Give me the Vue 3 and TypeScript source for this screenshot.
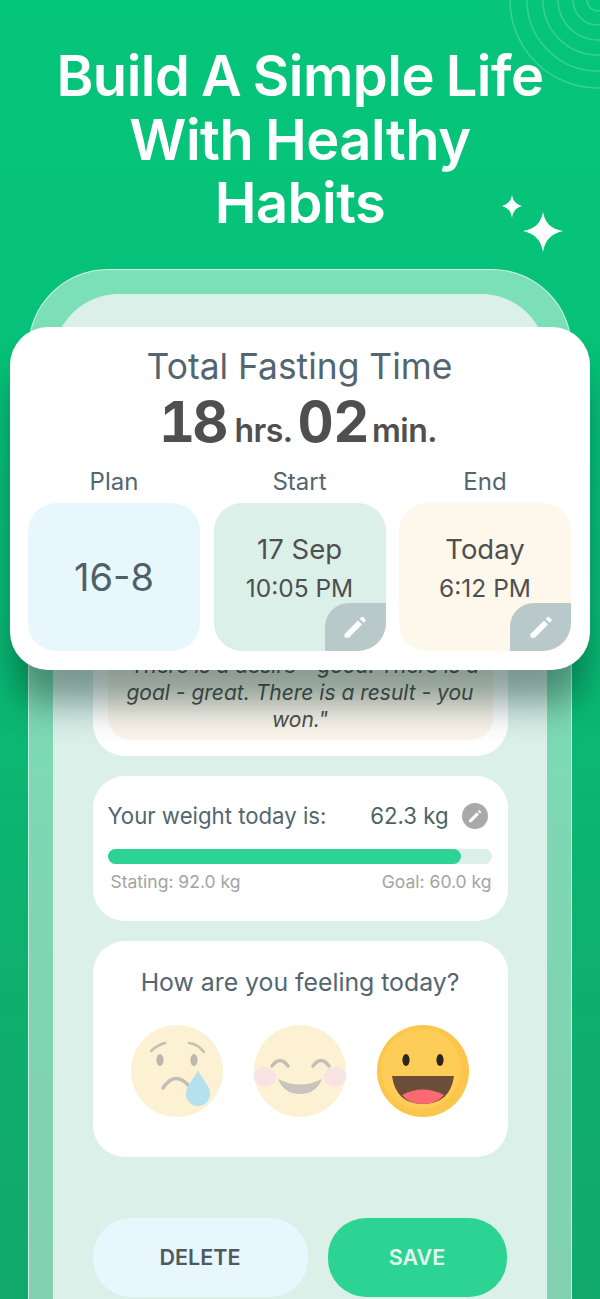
<script setup lang="ts">
interface Tile {
  label: string
  tone: string
  main: string
  sub?: string
  editable: boolean
}

const tiles: Tile[] = [
  { label: 'Plan', tone: 'blue', main: '16-8', editable: false },
  { label: 'Start', tone: 'green', main: '17 Sep', sub: '10:05 PM', editable: true },
  { label: 'End', tone: 'cream', main: 'Today', sub: '6:12 PM', editable: true }
]

const rings = [88, 71, 55, 40, 25, 11]
const pencil =
  'M3.5 17.5 14.6 6.4l3.4 3.4L6.9 20.9a1 1 0 0 1-.7.3H4a1 1 0 0 1-1-1v-2a1 1 0 0 1 .5-.7zM16 5l1.4-1.4a1.2 1.2 0 0 1 1.7 0l1.7 1.7a1.2 1.2 0 0 1 0 1.7L19.4 8.4z'
</script>

<template>
  <main class="page">
    <svg class="rings" width="110" height="100" viewBox="490 0 110 100" aria-hidden="true">
      <circle v-for="r in rings" :key="r" cx="598" cy="0" :r="r" />
    </svg>
    <svg class="sparkles" width="64" height="58" viewBox="0 0 64 58" aria-hidden="true">
      <path d="M11 0c1 6 4 9 10 11-6 2-9 5-10 12-1-7-4-10-10-12 6-2 9-5 10-11z" />
      <path d="M42 17c2 11 8 17 20 19-12 3-18 9-20 21-2-12-8-18-20-21 12-2 18-8 20-19z" />
    </svg>

    <h1 class="headline">Build A Simple Life<br />With Healthy<br />Habits</h1>

    <div class="phone">
      <div class="screen">
        <section class="card quote-card">
          <p class="quote">"There is a desire - good. There is a goal - great. There is a result - you won."</p>
        </section>

        <section class="card weight-card">
          <div class="weight-row">
            <span>Your weight today is:</span>
            <span class="weight-value">62.3 kg</span>
            <span class="round-edit">
              <svg width="16" height="16" viewBox="0 0 24 24"><path :d="pencil" /></svg>
            </span>
          </div>
          <div class="track"><div class="fill" :style="{ width: '92%' }"></div></div>
          <div class="weight-limits">
            <span>Stating: 92.0 kg</span>
            <span>Goal: 60.0 kg</span>
          </div>
        </section>

        <section class="card feeling-card">
          <h2>How are you feeling today?</h2>
          <div class="faces">
            <svg class="face" viewBox="0 0 92 92" aria-label="Sad">
              <circle cx="46" cy="46" r="46" fill="#fdf1d3" />
              <path d="M20 26q6-6 14-8M58 18q9 1 15 9" class="line" />
              <ellipse cx="29" cy="35" rx="3.6" ry="6" fill="#bdb8ae" />
              <ellipse cx="63" cy="35" rx="3.6" ry="6" fill="#bdb8ae" />
              <path d="M32 63q12-18 26-2" class="line thick" />
              <path d="M67 45c3 8 12 15 12 24a12 12 0 0 1-24 0c0-9 9-16 12-24z" fill="#b5e0ee" />
            </svg>
            <svg class="face" viewBox="0 0 92 92" aria-label="Happy">
              <circle cx="46" cy="46" r="46" fill="#fdf1d3" />
              <ellipse cx="11" cy="52" rx="11" ry="10" fill="#f8e2e2" />
              <ellipse cx="81" cy="52" rx="11" ry="10" fill="#f8e2e2" />
              <path d="M18 41q8-11 16 0M59 41q8-11 16 0" class="line thick" />
              <path d="M24 54q22 11 44 0q-6 15-22 15t-22-15z" fill="#c9c4bd" />
            </svg>
            <svg class="face" viewBox="0 0 92 92" aria-label="Very happy">
              <circle cx="46" cy="46" r="46" fill="#fcc54b" />
              <circle cx="44" cy="44" r="40" fill="#fdcd58" />
              <ellipse cx="29" cy="35" rx="3.6" ry="6" fill="#2f241e" />
              <ellipse cx="63" cy="35" rx="3.6" ry="6" fill="#2f241e" />
              <path d="M15 51h62q-4 28-31 28t-31-28z" fill="#6c4d3a" />
              <path d="M25 70q21-11 42 0q-7 9-21 9t-21-9z" fill="#fb6a72" />
            </svg>
          </div>
        </section>

        <div class="actions">
          <button class="delete-btn" type="button">DELETE</button>
          <button class="save-btn" type="button">SAVE</button>
        </div>
      </div>
    </div>

    <section class="summary">
      <h2 class="summary-title">Total Fasting Time</h2>
      <p class="duration">
        <b class="hours">18</b><span class="unit">hrs.</span><b>02</b><span class="unit minutes">min.</span>
      </p>
      <div class="tiles">
        <div v-for="tile in tiles" :key="tile.label" class="tile-col">
          <span class="tile-label">{{ tile.label }}</span>
          <div class="tile" :class="tile.tone">
            <template v-if="tile.sub">
              <span class="tile-main">{{ tile.main }}</span>
              <span class="tile-sub">{{ tile.sub }}</span>
            </template>
            <span v-else class="tile-plan">{{ tile.main }}</span>
            <span v-if="tile.editable" class="tile-edit">
              <svg width="28" height="28" viewBox="0 0 24 24"><path :d="pencil" /></svg>
            </span>
          </div>
        </div>
      </div>
    </section>
  </main>
</template>

<style scoped>
.page {
  position: relative;
  height: 1299px;
  overflow: hidden;
  padding-top: 45px;
  box-sizing: border-box;
  background: linear-gradient(180deg, #05c57a 0%, #07c077 35%, #0eb06e 75%, #12a86c 100%);
  font-family: Inter, "Liberation Sans", sans-serif;
}

.rings {
  position: absolute;
  top: 0;
  right: 0;
}

.rings circle {
  fill: none;
  stroke: rgba(255, 255, 255, 0.2);
  stroke-width: 1.5;
}

.sparkles {
  position: absolute;
  top: 195px;
  left: 501px;
  fill: #fff;
}

.headline {
  margin: 0;
  color: #fff;
  font-size: 56px;
  font-weight: 600;
  line-height: 63.5px;
  letter-spacing: -0.5px;
  word-spacing: -2px;
  text-align: center;
}

.phone {
  box-sizing: border-box;
  width: 544px;
  margin: 33px auto 0;
  padding: 24px 24px 0;
  border: 1.5px solid rgba(255, 255, 255, 0.65);
  border-bottom: 0;
  border-radius: 80px 80px 0 0;
  background: rgba(255, 255, 255, 0.47);
}

.screen {
  height: 1010px;
  box-sizing: border-box;
  padding: 316px 39.5px 0;
  border-radius: 66px 66px 0 0;
  background: #daf0e9;
}

.card {
  border-radius: 32px;
  background: #fff;
}

.quote-card {
  box-sizing: border-box;
  height: 146px;
  margin-bottom: 20px;
  padding: 15px;
}

.quote {
  box-sizing: border-box;
  height: 115px;
  margin: 0;
  padding: 27.5px 10px 0;
  border-radius: 22px;
  background: #fbf5ec;
  color: #50504f;
  font-size: 21px;
  font-style: italic;
  line-height: 27px;
  text-align: center;
}

.weight-card {
  box-sizing: border-box;
  height: 145px;
  margin-bottom: 20px;
  padding: 26px 16px 0 15px;
}

.weight-row {
  display: flex;
  align-items: center;
  height: 28px;
  color: #536670;
  font-size: 22.2px;
}

.weight-value {
  margin-left: auto;
  color: #4f5f68;
}

.round-edit {
  display: flex;
  align-items: center;
  justify-content: center;
  width: 26px;
  height: 26px;
  margin-left: 13px;
  margin-right: 4px;
  border-radius: 50%;
  background: #a9a9a9;
  fill: #fff;
}

.track {
  height: 15px;
  margin-top: 19px;
  border-radius: 8px;
  background: #daf0e9;
}

.fill {
  height: 100%;
  border-radius: 8px;
  background: #2cd392;
}

.weight-limits {
  display: flex;
  justify-content: space-between;
  margin-top: 8px;
  padding-left: 3px;
  color: #a3a3a3;
  font-size: 17.5px;
  line-height: 20px;
}

.feeling-card {
  box-sizing: border-box;
  height: 216px;
  padding-top: 26px;
  text-align: center;
}

.feeling-card h2 {
  margin: 0;
  color: #536670;
  font-size: 24.8px;
  font-weight: 400;
  line-height: 30px;
}

.faces {
  display: flex;
  justify-content: center;
  gap: 31px;
  margin-top: 28px;
}

.face {
  width: 92px;
  height: 92px;
}

.line {
  fill: none;
  stroke: #c4bfb6;
  stroke-width: 2.5;
  stroke-linecap: round;
}

.thick {
  stroke-width: 3.5;
}

.actions {
  display: flex;
  gap: 20px;
  margin-top: 61px;
}

.actions button {
  height: 79px;
  border: 0;
  border-radius: 38px;
  font: inherit;
  font-size: 21.5px;
  font-weight: 600;
}

.delete-btn {
  width: 215px;
  background: #e8f7fd;
  color: #4e5a60;
}

.save-btn {
  width: 179px;
  background: #2cd392;
  color: #e1f8ef;
}

.summary {
  position: absolute;
  top: 327px;
  left: 10px;
  box-sizing: border-box;
  width: 580px;
  height: 343px;
  padding: 17px 19px 0 18px;
  border-radius: 38px;
  background: #fff;
  box-shadow: 0 38px 36px -4px rgba(0, 45, 35, 0.45);
  text-align: center;
}

.summary-title {
  margin: 0;
  color: #536670;
  font-size: 35.4px;
  font-weight: 400;
  line-height: 46px;
}

.duration {
  margin: 2px 0 0;
  padding-left: 2px;
  color: #4f4f4f;
  font-size: 32px;
  font-weight: 600;
  line-height: 60px;
  letter-spacing: -0.5px;
}

.duration b {
  font-size: 56px;
  font-weight: 700;
  font-feature-settings: "tnum";
}

.duration .hours {
  letter-spacing: -3px;
  margin-right: 3px;
}

.unit {
  margin: 0 5px 0 6px;
}

.minutes {
  margin-left: 3px;
}

.tiles {
  display: grid;
  grid-template-columns: repeat(3, 172px);
  justify-content: space-between;
  margin-top: 6px;
}

.tile-col {
  display: flex;
  flex-direction: column;
  align-items: center;
  gap: 7px;
}

.tile-label {
  color: #536670;
  font-size: 24px;
  line-height: 29px;
}

.tile {
  position: relative;
  display: flex;
  flex-direction: column;
  align-items: center;
  justify-content: center;
  box-sizing: border-box;
  width: 172px;
  height: 148px;
  overflow: hidden;
  border-radius: 28px;
  color: #4f4f4f;
}

.blue {
  background: #e8f7fd;
}

.green {
  padding-bottom: 18px;
  background: #daf0e9;
}

.cream {
  padding-bottom: 18px;
  background: #fdf7ec;
}

.tile-plan {
  font-size: 38px;
  color: #4f5f68;
}

.tile-main {
  font-size: 27.5px;
  line-height: 36px;
}

.tile-sub {
  margin-top: 3px;
  font-size: 24.5px;
  line-height: 36px;
}

.tile-edit {
  position: absolute;
  right: 0;
  bottom: 0;
  display: flex;
  align-items: center;
  justify-content: center;
  width: 61px;
  height: 48px;
  border-radius: 24px 0 0 0;
  background: #b9c9c9;
  fill: #fff;
}
</style>

<style>
html,
body {
  margin: 0;
  background: #0eb06e;
}
</style>
